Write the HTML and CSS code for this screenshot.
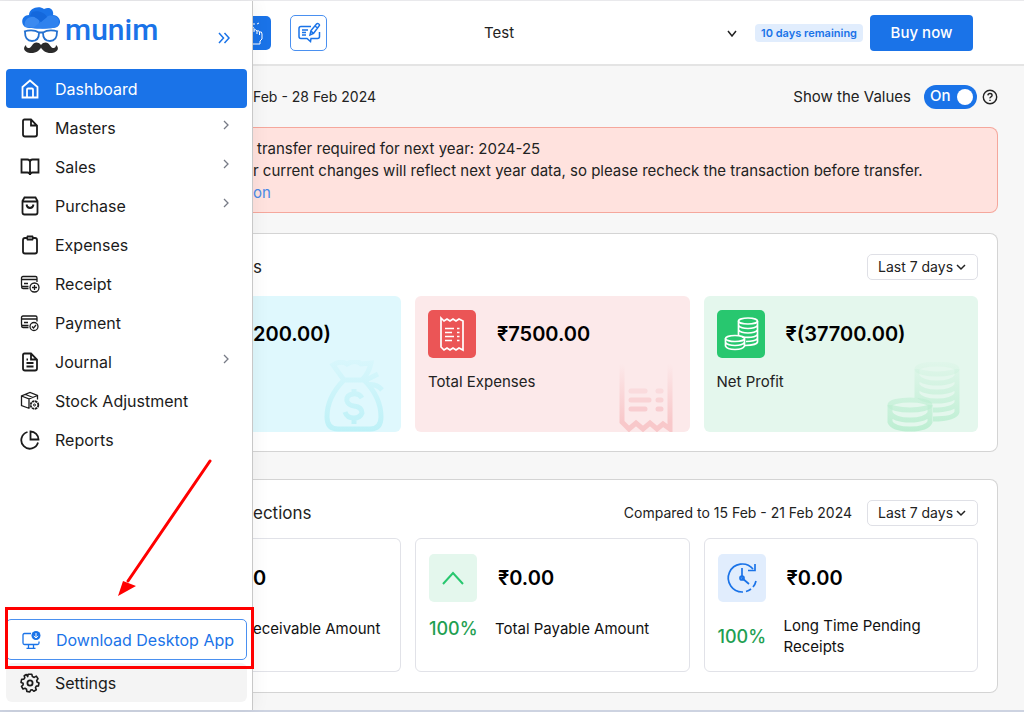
FILE: index.html
```html
<!DOCTYPE html>
<html lang="en">
<head>
<meta charset="utf-8">
<title>Munim Dashboard</title>
<link rel="stylesheet" href="styles.css">
</head>
<body>
<div class="app">
  <aside class="sidebar">
    <div class="brand">
      <svg class="brand-mark" viewBox="0 0 40 48" width="40" height="48" aria-hidden="true">
        <path d="M4 21C-1 17 1 9 8 9C8 2 18-1 23 3C30 0 33 5 32 9C40 10 41 18 36 21C32 23 8 23 4 21Z" fill="#1a73e8"/>
        <path d="M4 21C2 14 8 10 14 11C19 12 20 17 15 22Z" fill="#3b8af0"/>
        <path d="M12 22L27 10C35 8 41 14 36 21C30 23 18 23 12 22Z" fill="#2f82ee"/>
        <path d="M9 10C13 10 17 13 20 16L26 11C24 7 18 4 11 6Z" fill="#1468dc"/>
        <path d="M3 25.500C8 24 14 24 18 26.500H22C26 24 32 24 37 25.500M4 26C4 32 6 35 11 35C16 35 18 32 18 27M22 27C22 32 24 35 29 35C34 35 36 32 36 26" fill="none" stroke="#2471d0" stroke-width="1.800"/>
        <path d="M20 39C17 35.500 13 36 11 39.500C9 43 5 43 5 39C2 41 2 46 9 47C15 47.500 19 44 20 41.500C21 44 25 47.500 31 47C38 46 38 41 35 39C35 43 31 43 29 39.500C27 36 23 35.500 20 39Z" fill="#2b2b2b"/>
      </svg>
      <span class="brand-name">munim</span>
      <button class="collapse" aria-label="Collapse menu"><svg viewBox="0 0 12 12" width="12" height="12"><path d="M1 1l4.500 5L1 11M6.500 1l4.500 5-4.500 5"/></svg></button>
    </div>
    <nav class="menu">
      <a class="item active" href="#"><svg class="icon" viewBox="0 0 20 20"><path d="M2.500 8L10 1.500 17.500 8V18.500H2.500ZM7 18V10.500Q7 9.500 8 9.500H12Q13 9.500 13 10.500V18"/></svg><span>Dashboard</span></a>
      <a class="item" href="#"><svg class="icon" viewBox="0 0 20 20"><path d="M4.500 1.500H11L17 7.500V16.500Q17 18.500 15 18.500H5Q3 18.500 3 16.500V3Q3 1.500 4.500 1.500ZM11 1.500V7.500H17"/></svg><span>Masters</span><svg class="chev" viewBox="0 0 6 10"><path d="M1 1l4 4-4 4"/></svg></a>
      <a class="item" href="#"><svg class="icon" viewBox="0 0 20 20"><path d="M10 5Q10 2.500 7.500 2.500H1.500V15.500H7.500Q10 15.500 10 18Q10 15.500 12.500 15.500H18.500V2.500H12.500Q10 2.500 10 5V17.500"/></svg><span>Sales</span><svg class="chev" viewBox="0 0 6 10"><path d="M1 1l4 4-4 4"/></svg></a>
      <a class="item" href="#"><svg class="icon" viewBox="0 0 20 20"><path d="M2.500 5L4.500 1.500H15.500L17.500 5V16.500Q17.500 18.500 15.500 18.500H4.500Q2.500 18.500 2.500 16.500ZM2.500 5.500H17.500M6.500 8.500Q7 12 10 12T13.500 8.500"/></svg><span>Purchase</span><svg class="chev" viewBox="0 0 6 10"><path d="M1 1l4 4-4 4"/></svg></a>
      <a class="item" href="#"><svg class="icon" viewBox="0 0 20 20"><path d="M7 3H5Q3 3 3 5V16.500Q3 18.500 5 18.500H15Q17 18.500 17 16.500V5Q17 3 15 3H13M7.500 1.500H12.500Q13.500 3 12.500 4.500H7.500Q6.500 3 7.500 1.500Z"/></svg><span>Expenses</span></a>
      <a class="item" href="#"><svg class="icon thin" viewBox="0 0 20 20"><path d="M8.500 12.500H3Q1.500 12.500 1.500 11V4Q1.500 2.500 3 2.500H15.500Q17 2.500 17 4V8M1.500 5.500H17M4 9.500H8M1.500 12.500Q1.500 14.500 3 14.500H8.500"/><circle cx="14.500" cy="13.500" r="4.500"/><path d="M14.500 11V16M12 13.500H17"/></svg><span>Receipt</span></a>
      <a class="item" href="#"><svg class="icon thin" viewBox="0 0 20 20"><path d="M8.500 12.500H3Q1.500 12.500 1.500 11V4.500Q1.500 3 3 3H15.500Q17 3 17 4.500V8.500M1.500 6H17M4 9.500H8M1.500 12.500Q1.500 14.500 3 14.500H8.500"/><circle cx="14" cy="13.500" r="4"/><path d="M12 13.500l1.500 1.500 2.500-3"/></svg><span>Payment</span></a>
      <a class="item" href="#"><svg class="icon" viewBox="0 0 20 20"><path d="M4.500 1.500H11L17 7.500V16.500Q17 18.500 15 18.500H5Q3 18.500 3 16.500V3Q3 1.500 4.500 1.500ZM11 1.500V7.500H17M6.500 7.500H8M6.500 11H13.500M6.500 14.500H13.500"/></svg><span>Journal</span><svg class="chev" viewBox="0 0 6 10"><path d="M1 1l4 4-4 4"/></svg></a>
      <a class="item" href="#"><svg class="icon thin" viewBox="0 0 20 20"><path d="M9.500 17.500L1.500 14.500V5L10 1.500 17.500 4.500V8.500M1.500 5L9 8V17M9 8L17.500 4.500M5.500 3.500L13 6.500"/><circle cx="14.500" cy="14" r="3.800" stroke-width="1.800" stroke-dasharray="2.400 .6"/><circle cx="14.500" cy="14" r="1" stroke-width="1"/></svg><span>Stock Adjustment</span></a>
      <a class="item" href="#"><svg class="icon" viewBox="0 0 20 20"><path d="M7.500 2A8.500 8.500 0 1 0 18 12.500M10.500 1.500V9.500H18.500A8 8 0 0 0 10.500 1.500Z"/></svg><span>Reports</span></a>
    </nav>
    <div class="foot">
      <div class="download-wrap">
        <button class="item download"><svg class="icon" viewBox="0 0 20 20"><path d="M10 3.500H3.500Q2 3.500 2 5V13Q2 14.500 3.500 14.500H16.500Q18 14.500 18 13V11.500M7.500 15V18M12.500 15V18M5.500 18.300H14.500" stroke-width="1.300"/><circle cx="15" cy="5.500" r="4.500" fill="currentColor" stroke="none"/><path d="M15 3V8M12.800 6L15 8 17.200 6" stroke="#fff" stroke-width="1"/></svg><span>Download Desktop App</span></button>
        <svg class="pointer" viewBox="0 0 96 140" width="96" height="140" aria-hidden="true"><path d="M93 5L11 125" stroke="#f00" stroke-width="3" stroke-linecap="round"/><path d="M1 140L6 125L13 130L13 130Z M1 140L6 125L19 130Z" fill="#f00" stroke="none"/></svg>
      </div>
      <a class="item settings" href="#"><svg class="icon" viewBox="0 0 20 20"><path d="M8.200 1.200H11.800L12.400 3.600 14.200 4.400 16.300 3.100 18 5.800 16.700 7.500 17 9 19 10 18.400 13 16.300 13.100 15.500 14.700 16.300 16.800 13.800 18.300 12.200 16.700 10.700 17 9.800 19 6.800 18.400 6.500 16.200 5 15.300 3 16 1.500 13.300 3.100 12 3.100 10.200 1 9.400 1.700 6.300 3.900 6.100 4.800 4.800 4.200 2.700 6.300 1.500 7.700 3.600Z" stroke-linejoin="round" stroke-width="1.600"/><circle cx="10" cy="10" r="2.600"/></svg><span>Settings</span></a>
    </div>
  </aside>
  <div class="page">
    <header class="topbar">
      <button class="quick" aria-label="Quick entry"><svg viewBox="0 0 18 34" width="18" height="34"><path d="M-3 18V12.500Q-3 11 -1 11T1 12.500V16M1 14Q3 13 4 15Q6 14 6.500 16Q9 15 9 18V23L7 25V28H-1M1 7V9M4 8L6 7M-1 5V7M4 15V18M6.500 16V19"/></svg></button>
      <button class="edit" aria-label="Feedback"><svg viewBox="0 0 24 24" width="24" height="24"><path d="M14 5.500H4Q2 5.500 2 7.500V15.500Q2 17.500 4 17.500H10L13.500 20.500 14 17.500H20.500Q22.500 17.500 22.500 15.500V11M5 9H11M5 11.500H9M5 14H9M13 14L14 9.500 19.500 3Q20.500 2 21.800 3T22 5L16.500 12.500ZM18 5L20.500 7M14 10L16 12"/></svg></button>
      <div class="picker">
        <select class="company" aria-label="Company"><option>Test</option></select>
        <svg class="caret" viewBox="0 0 10 7" width="10" height="7"><path d="M1 1l4 5 4-5"/></svg>
      </div>
      <span class="trial">10 days remaining</span>
      <button class="buy">Buy now</button>
    </header>
    <main class="content">
      <div class="filters">
        <span class="period">Feb - 28 Feb 2024</span>
        <label class="show" for="values">Show the Values</label>
        <span class="switch"><input type="checkbox" id="values" checked><span class="on">On</span></span>
        <svg class="help" viewBox="0 0 16 16" width="16" height="16"><circle cx="8" cy="8" r="6.700"/><path d="M5.900 6.400Q6 4.500 8 4.500T10.100 6.300Q10.100 7.300 9 7.900T8 9.300M8 10.800V12"/></svg>
      </div>
      <section class="alert">
        <p class="first">transfer required for next year: 2024-25</p>
        <p>r current changes will reflect next year data, so please recheck the transaction before transfer.</p>
        <a href="#">on</a>
      </section>
      <section class="panel">
        <div class="panel-head">
          <h2>s</h2>
          <div class="picker range"><select aria-label="Overview range"><option>Last 7 days</option></select><svg class="caret" viewBox="0 0 10 7" width="10" height="7"><path d="M1 1l4 4 4-4"/></svg></div>
        </div>
        <div class="tiles">
          <article class="tile cut cyan">
            <div class="tile-top"><strong>200.00)</strong></div>
            <svg class="art" viewBox="0 0 60 72" width="60" height="72"><defs><linearGradient id="gc" x1="0" y1="0" x2="0" y2="72" gradientUnits="userSpaceOnUse"><stop offset="0" stop-color="#bdf1f7" stop-opacity=".2"/><stop offset="1" stop-color="#bdf1f7"/></linearGradient></defs><g fill="none" stroke="url(#gc)" stroke-width="5"><path d="M20 20L9 5Q17 0 23 4Q32-1 37 4L47 3Q45 13 38 20ZM20 20Q3 37 3 57Q3 69 14 69H46Q57 69 57 57Q57 37 40 20M40 21L54 14M43 25Q52 23 58 30M38 38Q35 33 29 34Q22 35 23 41Q24 45 30 46Q38 47 38 53Q36 58 30 58Q23 58 21 52M30 29V34M30 58V64"/></g></svg>
          </article>
          <article class="tile red">
            <div class="tile-top">
              <span class="badge"><svg viewBox="0 0 48 48" width="48" height="48"><path d="M13 8l3 3 3-2 3 2 3-2 3 2 3-2 4 2V40l-4-2-3 2-3-2-3 2-3-2-3 2-3-3Z"/><path d="M17 18.500H26M17 22.500H24M17 26.500H26M17 30.500H24M29 18.500H31.500M29 22.500H31.500M29 26.500H31.500M29 30.500H31.500"/></svg></span>
              <strong>₹7500.00</strong>
            </div>
            <p class="tile-label">Total Expenses</p>
            <svg class="art" viewBox="0 0 54 68" width="54" height="68"><defs><linearGradient id="gr" x1="0" y1="0" x2="0" y2="68" gradientUnits="userSpaceOnUse"><stop offset="0" stop-color="#f8c5c7" stop-opacity="0"/><stop offset=".85" stop-color="#f8c8ca"/></linearGradient></defs><g fill="none" stroke="url(#gr)" stroke-width="5"><path d="M3 0V58L10 65 17 59 24 65 31 59 38 65 44 60 51 65V0"/></g><g stroke="#f8cdd0" stroke-width="5" stroke-linecap="round"><path d="M12 27H26M39 27H42" opacity=".5"/><path d="M12 36H30M39 36H42" opacity=".8"/><path d="M12 45H26M39 45H42"/></g></svg>
          </article>
          <article class="tile green">
            <div class="tile-top">
              <span class="badge"><svg viewBox="0 0 48 48" width="48" height="48"><ellipse cx="31" cy="11" rx="9.500" ry="3"/><path d="M21.500 11V25M40.500 11V32Q40 35 28 35.500M21.500 15.500Q24 18.500 31 18.500T40.500 15.500M21.500 20Q24 23 31 23T40.500 20M25 27Q37 28.500 40.500 24.500M29 31.500Q38 31.500 40.500 28.500"/><ellipse cx="18" cy="28.500" rx="9.500" ry="3"/><path d="M8.500 28.500V36Q10 39.500 18 39.500T27.500 36V28.500M8.500 32.500Q11 35.500 18 35.500T27.500 32.500"/></svg></span>
              <strong>₹(37700.00)</strong>
            </div>
            <p class="tile-label">Net Profit</p>
            <svg class="art" viewBox="0 0 74 70" width="74" height="70"><defs><linearGradient id="gg" x1="0" y1="0" x2="0" y2="70" gradientUnits="userSpaceOnUse"><stop offset="0" stop-color="#bdeed2" stop-opacity=".1"/><stop offset="1" stop-color="#bdeed2"/></linearGradient></defs><g fill="none" stroke="url(#gg)" stroke-width="5"><ellipse cx="50" cy="7" rx="20" ry="5"/><path d="M30 7V36M70 7V50Q68 57 46 57M30 14Q34 21 50 21T70 14M30 23Q34 30 50 30T70 23M30 32Q34 39 50 39T70 32M46 48Q66 48 70 41"/><ellipse cx="23" cy="43" rx="20" ry="5"/><path d="M3 43V60Q6 67 23 67T43 60V43M3 51Q7 58 23 58T43 51"/></g></svg>
          </article>
        </div>
      </section>
      <section class="panel second">
        <div class="panel-head">
          <h2>ections</h2>
          <span class="compared">Compared to 15 Feb - 21 Feb 2024</span>
          <div class="picker range"><select aria-label="Collections range"><option>Last 7 days</option></select><svg class="caret" viewBox="0 0 10 7" width="10" height="7"><path d="M1 1l4 4 4-4"/></svg></div>
        </div>
        <div class="tiles">
          <article class="tile outlined cut">
            <div class="tile-top"><strong>0</strong></div>
            <div class="stat"><p>eceivable Amount</p></div>
          </article>
          <article class="tile outlined">
            <div class="tile-top"><span class="badge mint"><svg viewBox="0 0 48 48" width="48" height="48"><path d="M14 30L24 19 34 30"/></svg></span><strong>₹0.00</strong></div>
            <div class="stat"><span class="pct">100%</span><p>Total Payable Amount</p></div>
          </article>
          <article class="tile outlined">
            <div class="tile-top"><span class="badge sky"><svg viewBox="0 0 48 48" width="48" height="48"><path d="M35 15A14 14 0 1 0 25 38M28 37.500A14 14 0 0 0 33 35M35 33A14 14 0 0 0 38 27M37 10V16.500H30M24 14V24L31 30"/><circle cx="24" cy="24" r="2"/></svg></span><strong>₹0.00</strong></div>
            <div class="stat"><span class="pct">100%</span><p>Long Time Pending Receipts</p></div>
          </article>
        </div>
      </section>
    </main>
  </div>
</div>
</body>
</html>
```
FILE: styles.css
```css
* { box-sizing: border-box; }
body { margin: 0; font-family: Inter, "Open Sans", sans-serif; font-size: 14px; line-height: 22px; color: #222; background: #f7f7f7; }
h2, p { margin: 0; font-weight: 400; }
button, select { font: inherit; color: inherit; }
button { cursor: pointer; }
a { text-decoration: none; }
svg { display: block; flex: none; fill: none; stroke: currentColor; }

.app { display: flex; min-height: 100vh; border-top: 1px solid #e9e9ec; border-bottom: 2px solid #cdd3e1; }

/* Sidebar */
.sidebar { position: relative; z-index: 2; flex: none; width: 253px; display: flex; flex-direction: column; padding: 0 5px 8px 6px; background: #fff; border-right: 1px solid #c8c8c8; box-shadow: 2px 0 16px rgba(0, 0, 0, .05); }
.brand { display: flex; align-items: flex-start; height: 68px; padding: 5px 17px 0 15px; }
.brand-mark { stroke: none; }
.brand-name { margin-left: 4px; font-family: Roboto, sans-serif; font-size: 30px; line-height: 48px; font-weight: 500; color: #1a73e8; }
.collapse { margin: 26px 0 0 auto; padding: 0; border: 0; background: none; color: #1a73e8; }
.collapse svg { stroke-width: 1.500; }
.menu { display: flex; flex-direction: column; }
.item { display: flex; align-items: center; gap: 15px; width: 100%; height: 39px; padding: 0 14px; border-radius: 4px; font-size: 16px; color: #1b1b1b; white-space: nowrap; }
.item.active { background: #1a73e8; color: #fff; }
.icon { width: 20px; height: 20px; stroke-width: 1.800; }
.icon.thin { stroke-width: 1.300; }
.chev { width: 6px; height: 10px; margin: 0 4px 6px auto; color: #777b86; stroke-width: 1.300; }
.foot { display: flex; flex-direction: column; gap: 3px; margin-top: auto; }
.download-wrap { position: relative; }
.download-wrap::after { content: ""; position: absolute; inset: -12px -7px -9px -1px; border: 3px solid #f00; pointer-events: none; }
.download { height: 41px; border: 1px solid #4a90f0; border-radius: 5px; background: #fff; color: #1a73e8; }
.pointer { position: absolute; left: 111px; bottom: 64px; }
.settings { background: #f4f4f4; border-radius: 6px; }

/* Header */
.page { flex: 1; min-width: 0; display: flex; flex-direction: column; }
.topbar { display: flex; align-items: center; height: 65px; padding-right: 51px; background: #fff; border-bottom: 2px solid #e4e4e4; }
.quick { width: 18px; height: 34px; padding: 0; border: 0; border-radius: 0 5px 5px 0; background: #1a73e8; color: #fff; }
.edit { display: grid; place-items: center; width: 37px; height: 36px; margin-left: 19px; padding: 0; border: 1px solid #4a90f0; border-radius: 5px; background: #fff; color: #1a73e8; }
.edit svg { stroke-width: 1.500; }
.picker { position: relative; }
.picker select { width: 100%; border: 0; background: none; appearance: none; }
.caret { position: absolute; right: 0; top: 50%; margin-top: -3px; color: #222; stroke-width: 1.500; pointer-events: none; }
.topbar .picker { width: 253px; margin-left: auto; }
.topbar select { padding: 0; font-size: 15px; }
.trial { margin-left: 18px; padding: 0 6px; border-radius: 4px; background: #e1edfd; color: #1a73e8; font-size: 11px; line-height: 18px; font-weight: 600; white-space: nowrap; }
.buy { width: 103px; height: 36px; margin-left: 7px; padding: 0; border: 0; border-radius: 4px; background: #1a73e8; color: #fff; font-size: 15px; font-weight: 500; }

/* Content */
.content { padding-right: 26px; padding-bottom: 17px; }
.filters { display: flex; align-items: center; height: 61px; }
.show { margin-left: auto; font-size: 15px; }
.switch { position: relative; margin: 0 5px 0 13px; height: 24px; }
.switch input { display: block; width: 53px; height: 24px; margin: 0; border-radius: 12px; background: #1a73e8; appearance: none; }
.switch input::before { content: ""; display: block; width: 16px; height: 16px; margin: 4px 4px 0 auto; border-radius: 50%; background: #fff; }
.on { position: absolute; left: 6px; top: 0; color: #fff; font-size: 15px; font-weight: 500; pointer-events: none; }
.help { stroke-width: 1.400; }
.alert { padding: 10px 16px 8px 0; border: 1px solid #f5a79c; border-left: 0; border-radius: 0 8px 8px 0; background: #ffe2de; font-size: 15px; }
.alert .first { padding-left: 4px; }
.alert a { display: block; color: #4a8ae6; }
.panel { margin-top: 20px; padding: 20px 19px 19px 0; border: 1px solid #d4d4d4; border-left: 0; border-radius: 0 8px 8px 0; background: #fff; }
.panel.second { margin-top: 27px; padding-bottom: 20px; }
.panel-head { display: flex; align-items: center; height: 26px; margin-bottom: 16px; }
.panel.second .panel-head { margin-bottom: 12px; }
.panel-head h2 { font-size: 17px; }
.range { width: 111px; margin-left: auto; }
.range select { height: 26px; padding: 0 10px; border: 1px solid #dfe0e6; border-radius: 5px; }
.range .caret { right: 12px; }
.compared { margin-left: auto; }
.compared + .range { margin-left: 15px; }
.tiles { display: grid; grid-template-columns: 148px 1fr 1fr; gap: 14px; }
.tile { position: relative; min-height: 136px; padding: 13px 13px; border-radius: 6px; }
.cut { padding-left: 0; border-top-left-radius: 0; border-bottom-left-radius: 0; }
.tile-top { display: flex; align-items: center; gap: 21px; height: 49px; }
.tile-top strong { font-size: 20px; font-weight: 600; color: #000; }
.tile-label { margin-top: 13px; font-size: 15px; color: #222; }
.cyan { background: #dff8fd; }
.red { background: #fce9ea; }
.green { background: #e4f7ed; }
.badge { flex: none; width: 48px; height: 48px; border-radius: 5px; color: #fff; }
.badge svg { stroke-width: 1.700; }
.red .badge { background: #eb5556; }
.green .badge { background: #28c76f; }
.badge.mint { background: #e4f7ed; color: #28c76f; }
.badge.mint svg { stroke-width: 2; }
.badge.sky { background: #e1edfd; color: #1a73e8; }
.art { position: absolute; right: 17px; bottom: 0; }
.outlined { min-height: 134px; padding: 14px 12px 12px 13px; border: 1px solid #e1e2e8; }
.outlined.cut { padding-left: 0; border-left: 0; }
.stat { display: flex; align-items: center; gap: 18px; min-height: 26px; margin-top: 13px; font-size: 15px; line-height: 21px; color: #111; }
.pct { flex: none; width: 48px; font-size: 18px; font-weight: 500; color: #1fa052; }
```
